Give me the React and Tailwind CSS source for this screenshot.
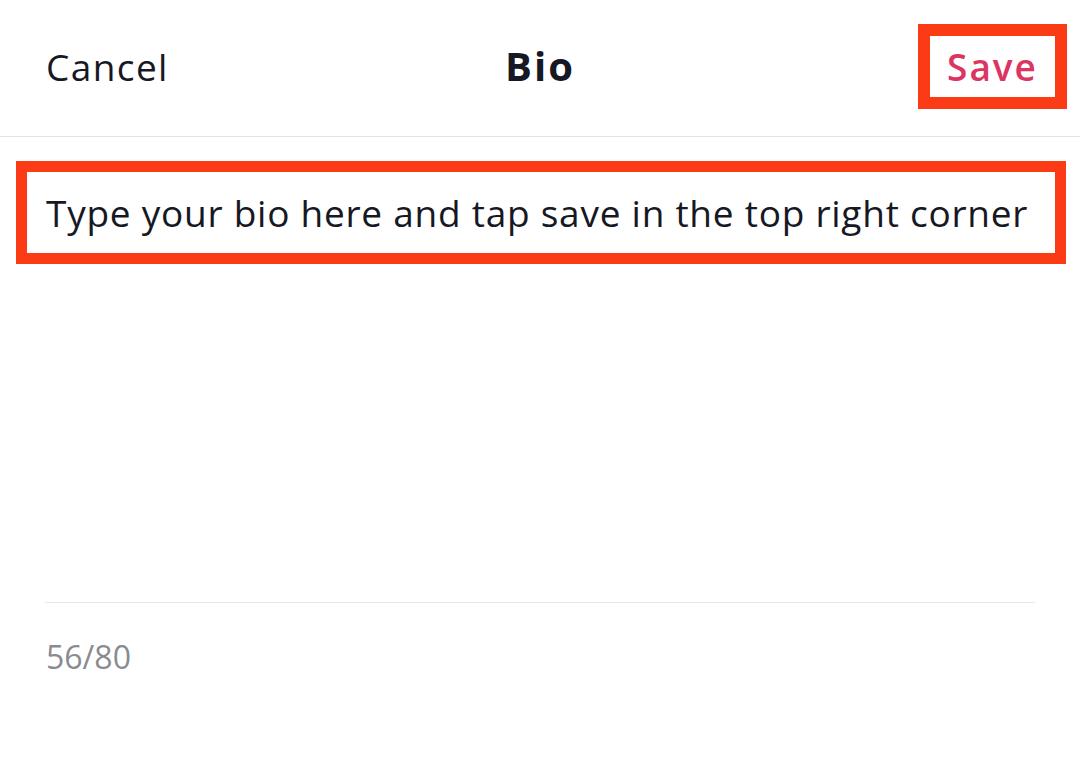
export default function App() {
  return (
    <div className="w-[1080px] h-[769px] bg-white overflow-hidden" style={{ fontFamily: '"Open Sans", Lato, sans-serif' }}>
      {/* Header */}
      <div className="h-[137px] border-b border-[#e3e3e4] grid grid-cols-[1fr_auto_1fr] items-center px-[13px]">
        <button className="justify-self-start ml-[33px] text-[37px] tracking-[1.4px] text-[#161823] leading-none -mt-[4px]">Cancel</button>
        <h1 className="text-[40px] font-bold tracking-[2px] text-[#161823] leading-none -mt-[4px]">Bio</h1>
        <div className="justify-self-end border-[12px] border-[#fb3b16] w-[149px] h-[85px] flex items-center justify-center -mt-[3px]">
          <span className="text-[37px] font-semibold tracking-[2px] text-[#dc3562] leading-none">Save</span>
        </div>
      </div>

      {/* Bio input */}
      <div className="mt-[24px] ml-[16px] mr-[14px] h-[103px] border-[11px] border-[#fb3b16] flex items-center pl-[19px]">
        <p className="text-[37px] tracking-[0.75px] text-[#161823] leading-none whitespace-nowrap">
          Type your bio here and tap save in the top right corner
        </p>
      </div>

      <div className="h-[338px]" />
      <div className="mx-[45px] border-t border-[#e8e8e9]" />

      <div className="ml-[46px] mt-[38px] text-[32px] text-[#8a8b91] leading-none">56/80</div>
    </div>
  );
}
